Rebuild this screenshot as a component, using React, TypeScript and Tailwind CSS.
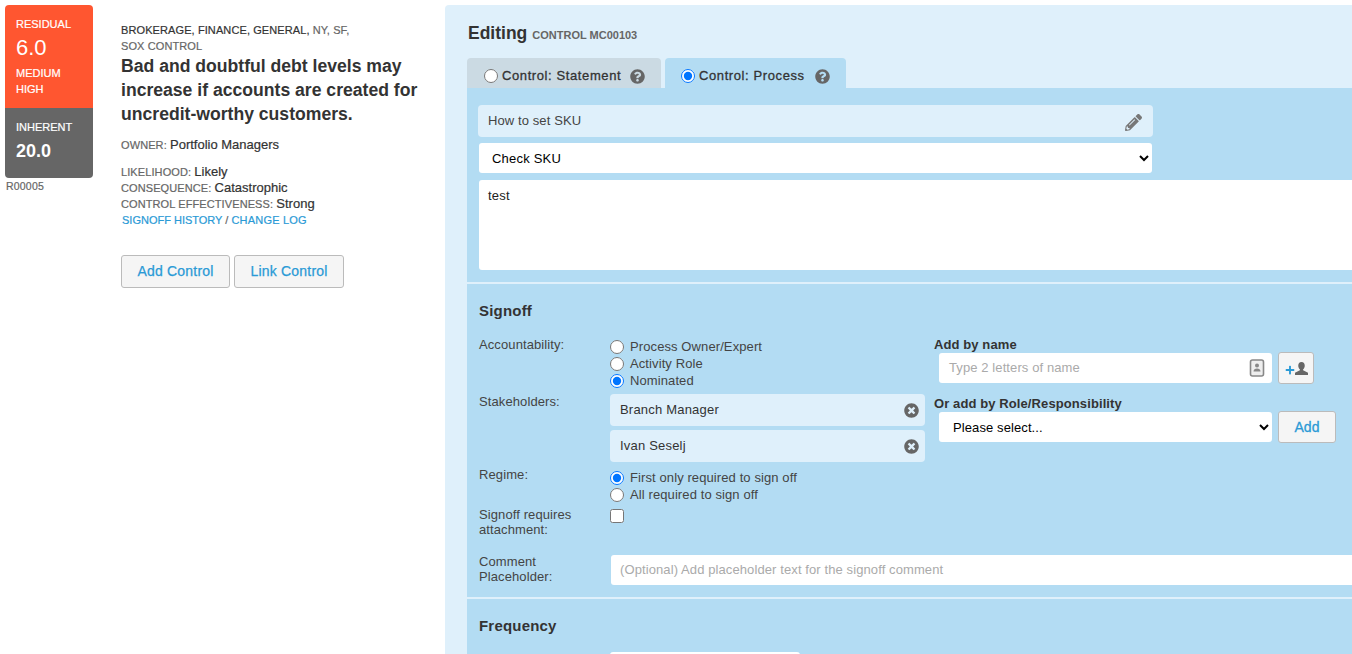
import { FaPencilAlt, FaQuestionCircle, FaTimesCircle, FaPlus } from "react-icons/fa";

function Radio({ label, checked }: { label: string; checked?: boolean }) {
    return (
        <label className="flex items-center h-[17px] text-[13px] text-[#444] tracking-[0.1px]">
            <input type="radio" defaultChecked={checked} name={label} className="w-[14px] h-[14px] m-0 mr-[6px]" />
            {label}
        </label>
    );
}

function Chip({ label }: { label: string }) {
    return (
        <div className="flex items-center justify-between h-[32px] w-[315px] pb-[1px] pl-[10px] pr-[6px] bg-[#dff0fb] rounded text-[13px] text-[#333] tracking-[0.2px]">
            {label}
            <FaTimesCircle className="text-[15px] text-[#666] mt-[1px]" />
        </div>
    );
}

function Meta({ label, value }: { label: string; value: string }) {
    return (
        <div className="h-[16px] leading-[16px]">
            <span className="text-[#666] [-webkit-text-stroke:0.2px]">{label}: </span>
            <span className="text-[#333] text-[13px] tracking-[0] [-webkit-text-stroke:0.2px]">{value}</span>
        </div>
    );
}

export default function App() {
    return (
        <div className="flex items-start w-[1352px] h-[654px] overflow-hidden bg-white font-['Liberation_Sans',Arial,sans-serif] text-[#333]">
            {/* Оценка риска */}
            <div className="w-[88px] ml-[5px] mt-[5px] shrink-0">
                <div className="h-[103px] bg-[#ff5630] rounded-t pl-[11px] pt-[13px] text-white">
                    <div className="text-[11px] leading-[13px] [-webkit-text-stroke:0.2px]">RESIDUAL</div>
                    <div className="text-[22px] leading-[26px] mt-[4px]">6.0</div>
                    <div className="text-[11px] leading-[16px] mt-[4px] [-webkit-text-stroke:0.2px]">MEDIUM<br />HIGH</div>
                </div>
                <div className="h-[70px] bg-[#666] rounded-b pl-[11px] pt-[13px] text-white">
                    <div className="text-[11px] leading-[13px] [-webkit-text-stroke:0.2px]">INHERENT</div>
                    <div className="text-[18px] leading-[22px] mt-[6px] font-bold">20.0</div>
                </div>
                <div className="text-[10.5px] leading-[12px] mt-[2px] ml-[1px] text-[#666] tracking-[0.2px] [-webkit-text-stroke:0.2px]">R00005</div>
            </div>

            {/* Описание */}
            <div className="w-[324px] ml-[28px] mt-[22px] shrink-0">
                <div className="text-[11px] leading-[16px] text-[#333] tracking-[0.1px] [-webkit-text-stroke:0.2px]">
                    BROKERAGE, FINANCE, GENERAL, <span className="text-[#666]">NY, SF,</span>
                    <br />
                    <span className="text-[#666]">SOX CONTROL</span>
                </div>
                <h1 className="text-[17.6px] leading-[24px] font-bold text-[#333] w-[300px]">
                    Bad and doubtful debt levels may increase if accounts are created for uncredit-worthy customers.
                </h1>
                <div className="text-[11px] leading-[16px] mt-[11px] tracking-[0.1px]">
                    <span className="text-[#666] [-webkit-text-stroke:0.2px]">OWNER: </span>
                    <span className="text-[13px] tracking-[0] [-webkit-text-stroke:0.2px]">Portfolio Managers</span>
                </div>
                <div className="text-[11px] mt-[11px] tracking-[0.1px]">
                    <Meta label="LIKELIHOOD" value="Likely" />
                    <Meta label="CONSEQUENCE" value="Catastrophic" />
                    <Meta label="CONTROL EFFECTIVENESS" value=" Strong" />
                    <div className="h-[16px] leading-[16px] text-[#2a9ad6] ml-[1px] tracking-[0] [-webkit-text-stroke:0.2px]">
                        SIGNOFF HISTORY <span className="text-[#666]">/</span> <span className="tracking-[0.2px]">CHANGE LOG</span>
                    </div>
                </div>
                <div className="flex gap-[4px] mt-[27px]">
                    <button className="w-[109px] h-[33px] bg-[#f5f5f5] border border-[#bbb] rounded-[3px] text-[14px] text-[#2a9ad6] tracking-[0.2px] [-webkit-text-stroke:0.25px]">Add Control</button>
                    <button className="w-[110px] h-[33px] bg-[#f5f5f5] border border-[#bbb] rounded-[3px] text-[14px] text-[#2a9ad6] tracking-[0.2px] [-webkit-text-stroke:0.25px]">Link Control</button>
                </div>
            </div>

            {/* Панель редактирования */}
            <div className="w-[1000px] h-[700px] mt-[5px] shrink-0 bg-[#dff0fb] rounded-tl pl-[22px]">
                <div className="flex items-baseline h-[53px] pt-[16px] pl-[1px]">
                    <span className="text-[17.5px] leading-[24px] font-bold text-[#333]">Editing</span>
                    <span className="text-[11px] font-bold text-[#666] ml-[5px]">CONTROL MC00103</span>
                </div>

                <div className="flex gap-[4px] h-[30px]">
                    <div className="flex items-center w-[194px] pl-[17px] pt-[6px] bg-[#cbdae3] rounded-t text-[13px] text-[#333] tracking-[0.6px] [-webkit-text-stroke:0.3px]">
                        <input type="radio" name="tab" className="w-[14px] h-[14px] m-0 mr-[4px]" />
                        Control: Statement
                        <FaQuestionCircle className="ml-[9px] text-[15px] text-[#666]" />
                    </div>
                    <div className="flex items-center w-[181px] pl-[16px] pt-[6px] bg-[#b3dcf3] rounded-t text-[13px] text-[#333] tracking-[0.6px] [-webkit-text-stroke:0.3px]">
                        <input type="radio" name="tab" defaultChecked className="w-[14px] h-[14px] m-0 mr-[4px]" />
                        Control: Process
                        <FaQuestionCircle className="ml-[10px] text-[15px] text-[#666]" />
                    </div>
                </div>

                <div className="bg-[#b3dcf3]">
                    <div className="h-[194px] pt-[17px] pl-[11px]">
                        <div className="flex items-center justify-between w-[675px] h-[32px] pl-[10px] pr-[11px] bg-[#dff0fb] rounded text-[13px] text-[#444] tracking-[0.1px]">
                            How to set SKU
                            <FaPencilAlt className="text-[17px] text-[#777] mt-[2px]" />
                        </div>
                        <select className="block w-[673px] h-[30px] mt-[6px] ml-[1px] pl-[9px] bg-white rounded-[3px] text-[13px] tracking-[0.2px] text-black">
                            <option>Check SKU</option>
                        </select>
                        <div className="h-[90px] mt-[7px] ml-[1px] pl-[9px] pt-[7px] bg-white rounded-[3px] text-[13px] tracking-[0.2px] leading-[17px] text-[#222]">test</div>
                    </div>

                    {/* Signoff */}
                    <div className="h-[317px] border-y-[2px] border-[#dff0fb] pl-[12px] text-[13px] tracking-[0.1px]">
                        <h2 className="text-[15px] leading-[20px] font-bold text-[#333] tracking-[0.2px] mt-[17px]">Signoff</h2>
                        <div className="flex mt-[17px]">
                            <div className="w-[455px] shrink-0">
                                <div className="flex h-[50px]">
                                    <div className="w-[131px] leading-[17px] -mt-[2px] text-[#444]">Accountability:</div>
                                    <div>
                                        <Radio label="Process Owner/Expert" />
                                        <Radio label="Activity Role" />
                                        <Radio label="Nominated" checked />
                                    </div>
                                </div>
                                <div className="flex mt-[6px]">
                                    <div className="w-[131px] leading-[17px] -mt-[1px] text-[#444]">Stakeholders:</div>
                                    <div className="flex flex-col gap-[4px]">
                                        <Chip label="Branch Manager" />
                                        <Chip label="Ivan Seselj" />
                                    </div>
                                </div>
                                <div className="flex mt-[6px]">
                                    <div className="w-[131px] leading-[17px] -mt-[2px] text-[#444]">Regime:</div>
                                    <div className="pt-[1px]">
                                        <Radio label="First only required to sign off" checked />
                                        <Radio label="All required to sign off" />
                                    </div>
                                </div>
                                <div className="flex mt-[4px] h-[44px]">
                                    <div className="w-[131px] leading-[15px] text-[#444]">Signoff requires<br />attachment:</div>
                                    <input type="checkbox" className="w-[14px] h-[14px] m-0 mt-[2px]" />
                                </div>
                            </div>
                            <div className="flex-1 -mt-[1px]">
                                <div className="font-bold text-[13px] leading-[15px] text-[#333]">Add by name</div>
                                <div className="flex items-start ml-[5px] gap-[6px]">
                                    <div className="flex items-center justify-between w-[333px] h-[30px] mt-[1px] pl-[10px] pr-[7px] bg-white rounded-[3px] text-[#aaa]">
                                        Type 2 letters of name
                                        <svg width="16" height="18" viewBox="0 0 16 18" className="text-[#888]">
                                            <rect x="1.5" y="1" width="13" height="16" rx="2" fill="#eee" stroke="currentColor" strokeWidth="1.6" />
                                            <circle cx="8" cy="6.5" r="2" fill="currentColor" />
                                            <path d="M4.5 12.5c0-2 1.5-3 3.5-3s3.5 1 3.5 3z" fill="currentColor" />
                                        </svg>
                                    </div>
                                    <button className="flex items-center justify-center w-[36px] h-[32px] bg-[#f5f5f5] border border-[#bbb] rounded-[3px]">
                                        <FaPlus className="text-[10px] text-[#2a9ad6] mt-[3px]" />
                                        <svg width="13" height="13" viewBox="0 0 12 12" className="text-[#666]">
                                            <path fill="currentColor" d="M6 0C4 0 3 1.6 3 3.4c0 1.4.6 2.6 1.5 3.3v1L0 10v2h12v-2L7.5 7.7v-1C8.4 6 9 4.8 9 3.4 9 1.6 8 0 6 0z" />
                                        </svg>
                                    </button>
                                </div>
                                <div className="font-bold text-[13px] leading-[15px] text-[#333] mt-[12px]">Or add by Role/Responsibility</div>
                                <div className="flex items-start ml-[5px] gap-[6px]">
                                    <select className="w-[333px] h-[30px] mt-[1px] pl-[10px] bg-white rounded-[3px] text-[13px] text-black">
                                        <option>Please select...</option>
                                    </select>
                                    <button className="w-[58px] h-[32px] bg-[#f5f5f5] border border-[#bbb] rounded-[3px] text-[14px] text-[#2a9ad6] [-webkit-text-stroke:0.3px]">Add</button>
                                </div>
                            </div>
                        </div>
                        <div className="flex items-start mt-[5px]">
                            <div className="w-[132px] leading-[15px] -mt-[2px] text-[#444]">Comment<br />Placeholder:</div>
                            <div className="flex items-center w-[800px] h-[30px] -mt-[1px] pl-[9px] bg-white rounded-[3px] text-[#aaa]">
                                (Optional) Add placeholder text for the signoff comment
                            </div>
                        </div>
                    </div>

                    {/* Frequency */}
                    <div className="h-[200px] pl-[12px]">
                        <h2 className="text-[15px] leading-[20px] font-bold text-[#333] pt-[17px] h-[53px] tracking-[0.2px]">Frequency</h2>
                        <div className="w-[190px] h-[30px] ml-[131px] bg-white rounded-[3px]" />
                    </div>
                </div>
            </div>
        </div>
    );
}
